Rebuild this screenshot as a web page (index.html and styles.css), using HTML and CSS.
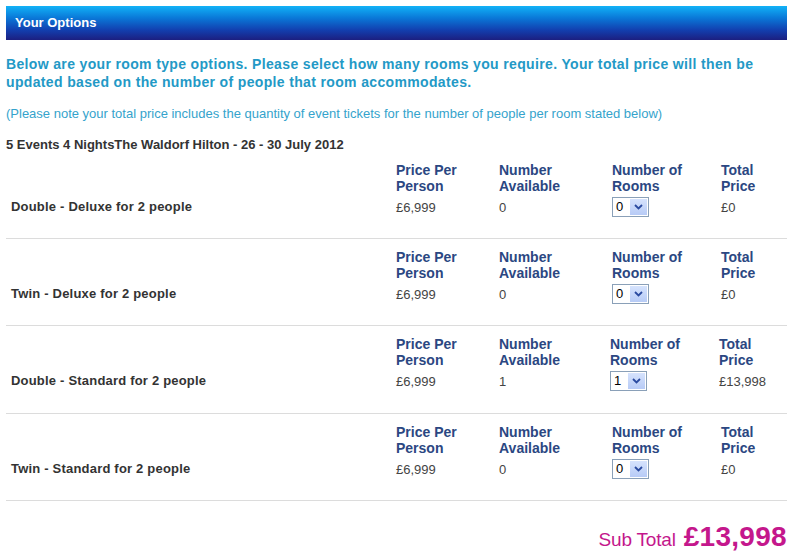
FILE: index.html
```html
<!DOCTYPE html>
<html>
<head>
<meta charset="utf-8">
<link rel="stylesheet" href="styles.css">
</head>
<body>
<div class="page">
  <div class="bar">Your Options</div>
  <p class="intro">Below are your room type options. Please select how many rooms you require. Your total price will then be updated based on the number of people that room accommodates.</p>
  <p class="note">(Please note your total price includes the quantity of event tickets for the number of people per room stated below)</p>
  <p class="title">5 Events 4 NightsThe Waldorf Hilton - 26 - 30 July 2012</p>

  <div class="rooms">
  <div class="room">
    <div class="name">Double - Deluxe for 2 people</div>
    <div class="col c-price"><div class="hd">Price Per<br>Person</div><div class="val">£6,999</div></div>
    <div class="col c-avail"><div class="hd">Number<br>Available</div><div class="val">0</div></div>
    <div class="col c-rooms"><div class="hd">Number of<br>Rooms</div><div class="val"><span class="sel"><span class="opt">0</span><span class="btn"><svg width="9" height="6" viewBox="0 0 9 6"><path d="M1 1 L4.5 4.5 L8 1" fill="none" stroke="#2a4aa0" stroke-width="1.8"/></svg></span></span></div></div>
    <div class="col c-total"><div class="hd">Total<br>Price</div><div class="val">£0</div></div>
  </div>

  <div class="room">
    <div class="name">Twin - Deluxe for 2 people</div>
    <div class="col c-price"><div class="hd">Price Per<br>Person</div><div class="val">£6,999</div></div>
    <div class="col c-avail"><div class="hd">Number<br>Available</div><div class="val">0</div></div>
    <div class="col c-rooms"><div class="hd">Number of<br>Rooms</div><div class="val"><span class="sel"><span class="opt">0</span><span class="btn"><svg width="9" height="6" viewBox="0 0 9 6"><path d="M1 1 L4.5 4.5 L8 1" fill="none" stroke="#2a4aa0" stroke-width="1.8"/></svg></span></span></div></div>
    <div class="col c-total"><div class="hd">Total<br>Price</div><div class="val">£0</div></div>
  </div>

  <div class="room shift">
    <div class="name">Double - Standard for 2 people</div>
    <div class="col c-price"><div class="hd">Price Per<br>Person</div><div class="val">£6,999</div></div>
    <div class="col c-avail"><div class="hd">Number<br>Available</div><div class="val">1</div></div>
    <div class="col c-rooms"><div class="hd">Number of<br>Rooms</div><div class="val"><span class="sel"><span class="opt">1</span><span class="btn"><svg width="9" height="6" viewBox="0 0 9 6"><path d="M1 1 L4.5 4.5 L8 1" fill="none" stroke="#2a4aa0" stroke-width="1.8"/></svg></span></span></div></div>
    <div class="col c-total"><div class="hd">Total<br>Price</div><div class="val">£13,998</div></div>
  </div>

  <div class="room">
    <div class="name">Twin - Standard for 2 people</div>
    <div class="col c-price"><div class="hd">Price Per<br>Person</div><div class="val">£6,999</div></div>
    <div class="col c-avail"><div class="hd">Number<br>Available</div><div class="val">0</div></div>
    <div class="col c-rooms"><div class="hd">Number of<br>Rooms</div><div class="val"><span class="sel"><span class="opt">0</span><span class="btn"><svg width="9" height="6" viewBox="0 0 9 6"><path d="M1 1 L4.5 4.5 L8 1" fill="none" stroke="#2a4aa0" stroke-width="1.8"/></svg></span></span></div></div>
    <div class="col c-total"><div class="hd">Total<br>Price</div><div class="val">£0</div></div>
  </div>
  </div>

  <div class="subtotal"><span class="st-label">Sub Total</span><span class="st-amt">£13,998</span></div>
</div>
</body>
</html>
```
FILE: styles.css
```css
html, body {
  margin: 0;
  padding: 0;
  background: #fff;
}
body {
  font-family: "Liberation Sans", Arial, sans-serif;
  color: #333;
}
.page {
  padding: 6px 7px 0 6px;
}
.bar {
  height: 34px;
  line-height: 34px;
  padding-left: 9px;
  color: #fff;
  font-weight: bold;
  font-size: 13px;
  background: linear-gradient(to bottom, #12b2f7 0%, #0a78d8 35%, #1240b0 70%, #1c1f80 100%);
}
.intro {
  margin: 15px 0 0 0;
  font-size: 14px;
  line-height: 18px;
  font-weight: bold;
  letter-spacing: 0.35px;
  color: #2399c6;
}
.note {
  margin: 15px 0 0 0;
  font-size: 13px;
  line-height: 16px;
  color: #35a3cc;
}
.title {
  margin: 15px 0 0 0;
  font-size: 13px;
  line-height: 16px;
  font-weight: bold;
  color: #333;
}
.room {
  display: grid;
  grid-template-columns: 390px 103px 113px 109px 66px;
  align-items: end;
  padding: 10px 0 21px 0;
  border-bottom: 1px solid #dcdcdc;
}
.room:first-child {
  padding-top: 9px;
}
.shift {
  grid-template-columns: 390px 103px 111px 109px 68px;
  padding-bottom: 22px;
}
.name {
  padding-left: 5px;
  height: 20px;
  line-height: 20px;
  font-size: 13px;
  font-weight: bold;
  letter-spacing: 0.2px;
  color: #333;
}
.hd {
  font-size: 14px;
  line-height: 16px;
  font-weight: bold;
  color: #2b4782;
}
.val {
  margin-top: 3px;
  height: 20px;
  display: flex;
  align-items: center;
  font-size: 13px;
  color: #444;
}
.sel {
  display: inline-flex;
  align-items: stretch;
  width: 37px;
  height: 20px;
  box-sizing: border-box;
  border: 1px solid #8aa0b8;
  background: #fff;
}
.opt {
  flex: 1;
  padding-left: 3px;
  font-size: 13px;
  line-height: 18px;
  color: #000;
}
.btn {
  width: 17px;
  margin: 1px;
  background: linear-gradient(to bottom, #d6e3fd, #b7cbf6);
  display: flex;
  align-items: center;
  justify-content: center;
}
.subtotal {
  display: flex;
  justify-content: flex-end;
  align-items: baseline;
  gap: 8px;
  margin-top: 20px;
  color: #c4178c;
}
.st-label {
  font-size: 19px;
  letter-spacing: -0.2px;
}
.st-amt {
  font-size: 28px;
  font-weight: bold;
  letter-spacing: 0.3px;
}
```
